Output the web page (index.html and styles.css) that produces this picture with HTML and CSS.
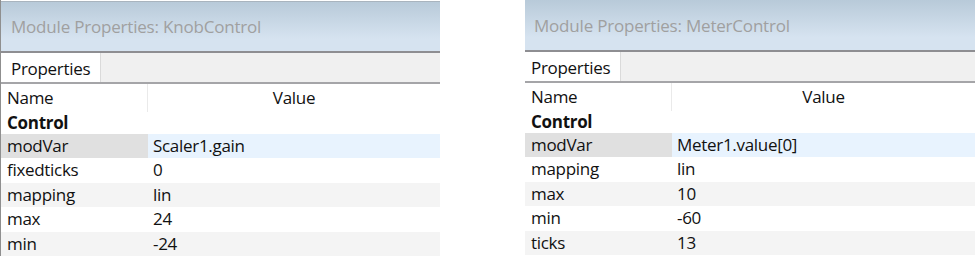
FILE: index.html
```html
<!DOCTYPE html>
<html>
<head>
	<meta charset="UTF-8">
	<title>Module Properties</title>
	<link rel="stylesheet" href="styles.css">
</head>
<body>
	<div class="panels">
		<div class="panel knob">
			<div class="title">Module Properties: KnobControl</div>
			<div class="tabs"><span class="tab">Properties</span></div>
			<div class="grid">
				<div class="row head"><span class="name">Name</span><span class="value">Value</span></div>
				<div class="row group"><span class="name">Control</span></div>
				<div class="row selected"><span class="name">modVar</span><span class="value">Scaler1.gain</span></div>
				<div class="row"><span class="name">fixedticks</span><span class="value">0</span></div>
				<div class="row alt"><span class="name">mapping</span><span class="value">lin</span></div>
				<div class="row"><span class="name">max</span><span class="value">24</span></div>
				<div class="row alt"><span class="name">min</span><span class="value">-24</span></div>
			</div>
		</div>
		<div class="panel meter">
			<div class="title">Module Properties: MeterControl</div>
			<div class="tabs"><span class="tab">Properties</span></div>
			<div class="grid">
				<div class="row head"><span class="name">Name</span><span class="value">Value</span></div>
				<div class="row group"><span class="name">Control</span></div>
				<div class="row selected"><span class="name">modVar</span><span class="value">Meter1.value[0]</span></div>
				<div class="row"><span class="name">mapping</span><span class="value">lin</span></div>
				<div class="row alt"><span class="name">max</span><span class="value">10</span></div>
				<div class="row"><span class="name">min</span><span class="value">-60</span></div>
				<div class="row alt"><span class="name">ticks</span><span class="value">13</span></div>
			</div>
		</div>
	</div>
</body>
</html>
```

FILE: styles.css
```css
body{
	margin: 0;
	background: #fff;
	font-family: "Open Sans", "Noto Sans", sans-serif;
	font-size: 17px;
	letter-spacing: -0.3px;
	color: #111;
}
.panels{
	display: flex;
	gap: 85px;
}
.panel{
	display: flex;
	flex-direction: column;
}
.knob{
	width: 439px;
	padding-top: 1px;
	border-left: 1px solid #8f8f8f;
}
.meter{
	width: 450px;
}
.title{
	height: 49px;
	border-bottom: 2px solid #8e8e92;
	background: linear-gradient(#b8cad9, #d6e3f0 75%);
	color: #a0a0a0;
	font-size: 17px;
	letter-spacing: -0.2px;
	line-height: 49px;
	padding-left: 10px;
}
.knob .title{
	border-top: 1px solid #a9b4be;
}
.meter .title{
	height: 50px;
	line-height: 52px;
	padding-left: 9px;
}
.tabs{
	display: flex;
	height: 29px;
	background: #f0f0f0;
	border-bottom: 2px solid #a5a5a8;
}
.tab{
	background: #fff;
	padding: 0 10px 0 10px;
	line-height: 31px;
	border-right: 1px solid #dadada;
}
.meter .tab{
	padding: 0 10px 0 6px;
}
.grid{
	display: flex;
	flex-direction: column;
}
.row{
	display: grid;
	grid-template-columns: 147px 1fr;
	height: 24.4px;
	line-height: 24px;
}
.row .name{
	padding-left: 6px;
}
.row .value{
	padding-left: 5px;
}
.head{
	height: 28px;
	line-height: 28px;
}
.head .name{
	border-right: 1px solid #eaeaea;
}
.head .value{
	text-align: center;
	padding-left: 0;
}
.group{
	height: 22px;
	line-height: 22px;
	font-weight: bold;
}
.selected .name{
	background: #e0e0e0;
}
.selected .value{
	background: #e8f3fe;
}
.alt{
	background: #f4f4f4;
}
```
